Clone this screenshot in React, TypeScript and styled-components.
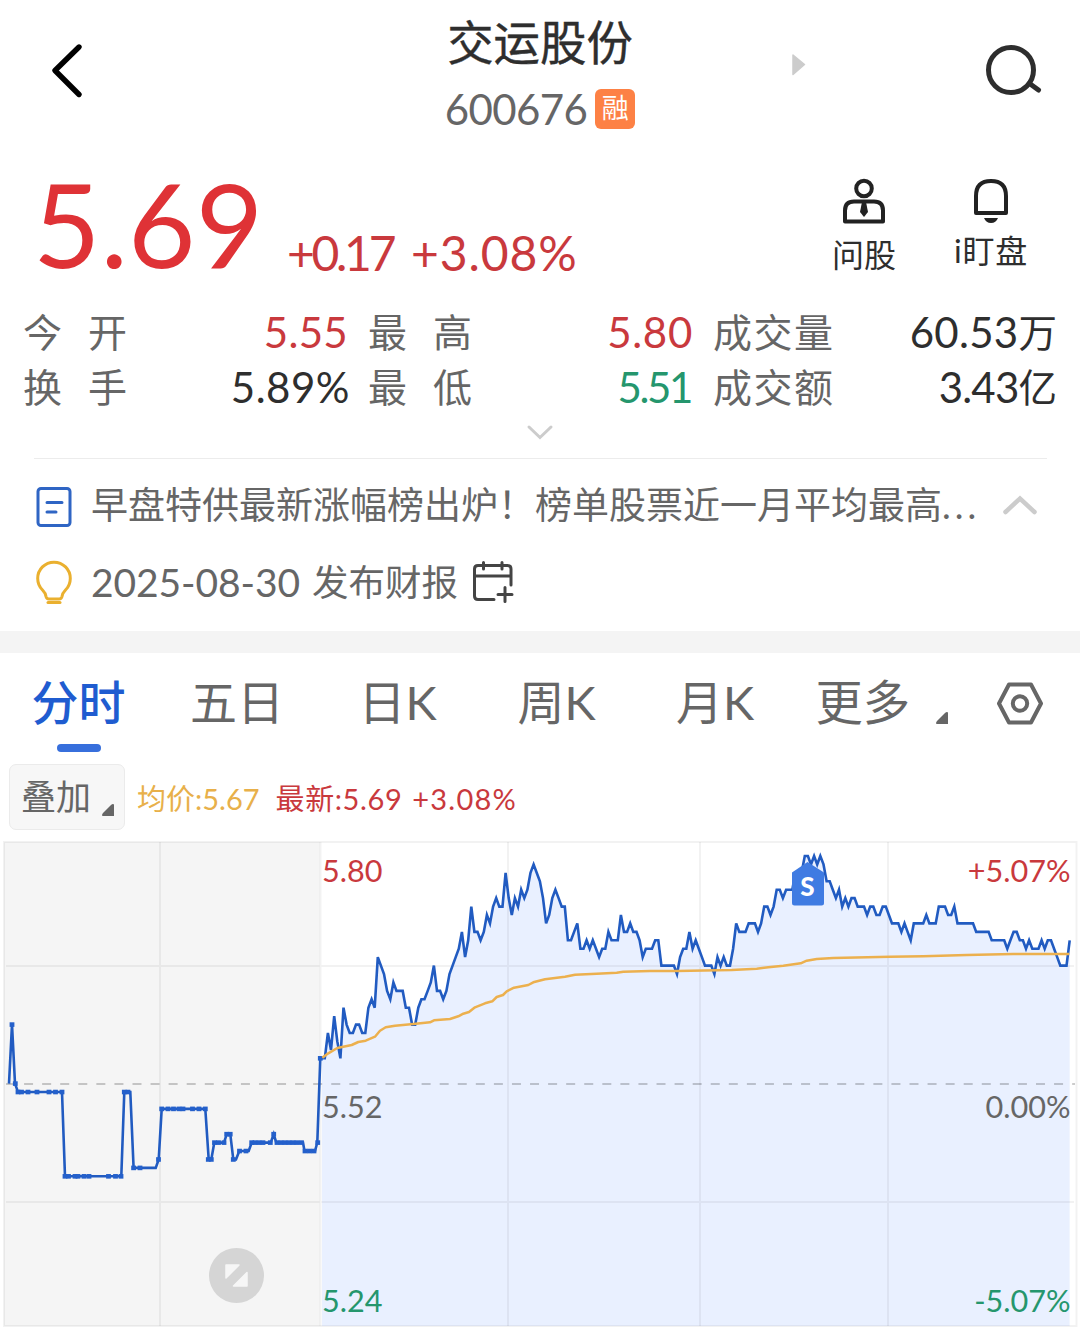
import React from "react";
import styled, { createGlobalStyle } from "styled-components";

const color = {
  red: "#c9393d",
  strongRed: "#df3236",
  green: "#25966d",
  ink: "#2e2e2e",
  text: "#666666",
  blue: "#1f5cd0",
  line: "#215bc1",
  amber: "#e8b04a",
};

const GlobalStyle = createGlobalStyle`
  * { box-sizing: border-box; }
  body { margin: 0; background: #fff; }
`;

const Page = styled.main`
  width: 1080px;
  height: 1336px;
  overflow: hidden;
  background: #fff;
  color: ${color.ink};
  font-family: Lato, "Noto Sans CJK SC", sans-serif;
  white-space: nowrap;
`;

const Icon = styled.svg`
  display: block;
  flex: none;
  overflow: visible;
`;

/* ---------- header ---------- */

const Header = styled.header`
  display: grid;
  grid-template-columns: 360px 360px 360px;
  height: 150px;
`;

const HeaderLeft = styled.div`
  padding: 44px 0 0 51px;
`;

const HeaderCenter = styled.div`
  display: flex;
  flex-direction: column;
  align-items: center;
  padding-top: 11px;
`;

const HeaderRight = styled.div`
  display: flex;
  align-items: flex-start;
  justify-content: space-between;
  padding: 44px 37px 0 72px;
`;

const StockName = styled.h1`
  margin: 0;
  font-size: 46.4px;
  font-weight: 400;
  line-height: 62px;
  -webkit-text-stroke: 0.4px currentColor;
`;

const CodeRow = styled.div`
  display: flex;
  align-items: center;
  gap: 8px;
  height: 40px;
  margin-top: 16px;
`;

const Code = styled.span`
  font-size: 42px;
  line-height: 40px;
  letter-spacing: -0.6px;
  color: ${color.text};
`;

const MarginTag = styled.span`
  width: 40px;
  height: 40px;
  border-radius: 6px;
  background: #fd8145;
  color: #fff;
  font-size: 27px;
  line-height: 38px;
  text-align: center;
`;

/* ---------- quote ---------- */

const Quote = styled.section`
  display: flex;
  align-items: flex-start;
  height: 156px;
  padding: 0 52px 0 33px;
`;

const Price = styled.span`
  width: 254px;
  padding-top: 3px;
  font-size: 116.5px;
  line-height: 140px;
  color: ${color.strongRed};
`;

const Change = styled.span<{ $width: number; $spacing: number }>`
  width: ${(p) => p.$width}px;
  padding-top: 73px;
  font-size: 48px;
  line-height: 60px;
  letter-spacing: ${(p) => p.$spacing}px;
  color: ${color.red};
`;

const Actions = styled.div`
  display: flex;
  gap: 58px;
  margin-left: auto;
  padding-top: 29px;
`;

const Action = styled.div<{ $rise?: number; $spacing?: number }>`
  display: flex;
  flex-direction: column;
  align-items: center;
  gap: ${(p) => 10 - (p.$rise ?? 0)}px;
  font-size: 32px;
  line-height: 42px;
  letter-spacing: ${(p) => p.$spacing ?? 0}px;
`;

/* ---------- statistics ---------- */

const Stats = styled.section`
  display: grid;
  grid-template-columns: 345px 345px 344px;
  grid-auto-rows: 55px;
  height: 110px;
  margin-top: -1px;
  padding-left: 23px;
`;

const Stat = styled.div<{ $inset: number }>`
  display: flex;
  align-items: center;
  justify-content: space-between;
  padding-right: ${(p) => p.$inset}px;
`;

const StatLabel = styled.span<{ $wide?: boolean }>`
  font-size: 39px;
  line-height: 55px;
  letter-spacing: ${(p) => (p.$wide ? 26 : 1.5)}px;
  color: ${color.text};
`;

const StatValue = styled.span<{ $tone: string; $spacing?: number }>`
  display: flex;
  align-items: center;
  font-size: 42px;
  line-height: 55px;
  letter-spacing: ${(p) => p.$spacing ?? 0}px;
  color: ${(p) => p.$tone};
`;

const Unit = styled.span`
  font-size: 38.5px;
  letter-spacing: 0;
`;

const Expand = styled.div`
  display: flex;
  justify-content: center;
  height: 43px;
  padding-top: 10px;
`;

/* ---------- notices ---------- */

const Notices = styled.section`
  height: 173px;
  margin: 0 33px 0 34px;
  border-top: 1px solid #ececec;
  padding-top: 10px;
`;

const Notice = styled.div`
  display: flex;
  align-items: center;
  height: 77px;
  color: ${color.text};
  font-size: 37px;
  line-height: 54px;
`;

const NoticeIcon = styled.div`
  display: flex;
  width: 57px;
  padding-left: 2px;
`;

const Headline = styled.span`
  width: 912px;
  padding-bottom: 5px;
`;

const Dots = styled.span`
  letter-spacing: 4px;
`;

const DateText = styled.span`
  padding-bottom: 6px;
  font-size: 39px;
  letter-spacing: -0.1px;
  margin-right: 12px;
`;

const Report = styled.span`
  padding-bottom: 5px;
  font-size: 36.5px;
  margin-right: 14px;
`;

const NoticeAction = styled.div`
  display: flex;
  padding-bottom: 5px;
`;

const Band = styled.div`
  height: 22px;
  background: #f4f4f4;
`;

/* ---------- tabs ---------- */

const Tabs = styled.nav`
  display: grid;
  grid-template-columns: 157px 160px 161px 157px 160px 181px 104px;
  height: 106px;
`;

const Tab = styled.div<{ $active?: boolean }>`
  display: flex;
  flex-direction: column;
  align-items: center;
  padding-top: 16px;
  font-size: 47px;
  font-weight: ${(p) => (p.$active ? 500 : 400)};
  line-height: 66px;
  color: ${(p) => (p.$active ? color.blue : color.text)};
  &::after {
    content: "";
    width: 44px;
    height: 8px;
    margin-top: 9px;
    border-radius: 4px;
    background: ${(p) => (p.$active ? "#376fdc" : "transparent")};
  }
`;

const MoreTab = styled.div`
  display: flex;
  align-items: flex-end;
  gap: 26px;
  height: 82px;
  padding-left: 20.5px;
  font-size: 47.3px;
  line-height: 66px;
  color: ${color.text};
`;

const Corner = styled.span<{ $lift: number }>`
  display: flex;
  padding-bottom: ${(p) => p.$lift}px;
`;

const Settings = styled.div`
  padding: 29px 0 0 21px;
`;

/* ---------- chart ---------- */

const Legend = styled.div`
  display: flex;
  align-items: center;
  height: 76px;
  padding: 0 0 0 9px;
  font-size: 29px;
`;

const Overlay = styled.button`
  display: flex;
  align-items: flex-end;
  gap: 11px;
  width: 116px;
  height: 66px;
  margin: 0 12px 0 0;
  padding: 0 0 1px 11px;
  border: 1px solid #ebebeb;
  border-radius: 7px;
  background: #f7f7f7;
  font: 35px/63px Lato, "Noto Sans CJK SC", sans-serif;
  color: ${color.text};
`;

const LegendItem = styled.span<{ $tone: string; $spacing: number; $gap: number }>`
  margin-right: ${(p) => p.$gap}px;
  padding-top: 4px;
  line-height: 42px;
  letter-spacing: ${(p) => p.$spacing}px;
  color: ${(p) => p.$tone};
`;

const Percent = styled.span`
  margin-left: 10px;
  letter-spacing: 1.2px;
`;

const ChartArea = styled.section`
  position: relative;
  height: 501px;
`;

const AxisLabel = styled.span<{ $tone: string; $top: number; $side: "left" | "right" }>`
  position: absolute;
  top: ${(p) => p.$top}px;
  ${(p) => (p.$side === "left" ? "left: 322px;" : "right: 9.5px;")}
  font-size: 30.6px;
  line-height: 40px;
  color: ${(p) => p.$tone};
`;

const CHART_TOP = 835;
const BASE_Y = 1083.6 - CHART_TOP;
const CENT = 8.43;
const OPEN_X = 321.7;
const MINUTE = 3.1165;

// Cents above the previous close (5.52), one entry per minute of trading.
const minutes = [
  3, 3, 6, 4, 8, 5, 3, 9, 7, 6, 6, 7, 7, 6, 6, 9, 10, 9, 15, 14,
  13, 11, 10, 12, 11, 11, 11, 9, 9, 7, 7, 9, 10, 10, 11, 12, 14, 11, 11, 10,
  11, 13, 14, 15, 16, 18, 15, 17, 21, 18, 18, 17, 18, 20, 19, 21, 22, 21, 21, 25,
  22, 20, 22, 21, 23, 22, 23, 25, 26, 25, 24, 22, 19, 20, 22, 23, 22, 21, 21, 17,
  17, 18, 19, 16, 16, 17, 16, 17, 16, 15, 16, 16, 18, 17, 17, 17, 20, 18, 18, 19,
  18, 18, 17, 15, 16, 16, 16, 17, 17, 14, 14, 14, 14, 14, 13, 15, 16, 16, 18, 16,
  17, 16, 15, 14, 14, 14, 13, 15, 14, 15, 14, 14, 16, 19, 18, 18, 18, 19, 19, 19,
  18, 19, 21, 21, 20, 21, 23, 23, 22, 23, 23, 23, 25, 25, 25, 27, 27, 26, 27, 26,
  27, 26, 24, 24, 23, 22, 23, 21, 22, 21, 22, 22, 21, 21, 21, 20, 21, 21, 20, 20,
  21, 21, 20, 19, 19, 19, 18, 19, 18, 17, 19, 19, 19, 19, 20, 19, 19, 19, 21, 21,
  21, 20, 20, 21, 19, 19, 19, 19, 19, 19, 18, 18, 18, 18, 18, 17, 17, 17, 17, 17,
  16, 17, 18, 18, 17, 17, 16, 17, 16, 16, 16, 17, 16, 17, 17, 16, 15, 14, 14, 14,
  17,
];

// Call auction: [x, cents relative to the previous close].
const auction: [number, number][] = [
  [9, 0], [12, 7], [15, 0], [18, -1], [62, -1], [65, -11], [121.3, -11], [124.3, -1],
  [130.3, -1], [133.6, -10], [155.7, -10], [158.7, -9], [161.7, -3], [205.3, -3],
  [208.7, -9], [211.3, -9], [214.3, -7], [224, -7], [226.7, -6], [230.3, -6],
  [233.3, -9], [236, -9], [239.3, -8], [248.7, -8], [251.7, -7], [270.7, -7],
  [273.7, -6], [276.3, -7], [303, -7], [304.5, -8], [315, -8], [317.3, -7], [320.3, 3],
];

// Order ticks printed on the auction line.
const ticks: [number, number][] = [
  [12, 7], [15.3, 0], [18, -1], [21.5, -1], [28, -1], [37, -1], [49, -1], [55.5, -1], [62, -1],
  [65, -11], [68.5, -11], [75, -11], [78, -11], [84, -11], [89, -11], [108.5, -11], [115.5, -11], [121, -11],
  [124.3, -1], [128, -1], [133.6, -10], [140, -10], [158.5, -9], [161.7, -3], [168, -3], [173.5, -3],
  [179, -3], [183, -3], [192.5, -3], [199, -3], [205.3, -3], [208.3, -9], [211.3, -9], [214.5, -7],
  [218.5, -7], [224, -7], [226.7, -6], [230.2, -6], [233.3, -9], [239.5, -8], [246, -8], [251.7, -7],
  [255, -7], [259, -7], [263, -7], [270.3, -7], [273.7, -6], [277, -7], [281, -7], [285, -7],
  [289, -7], [293, -7], [297, -7], [301.5, -7], [305, -8], [309.5, -8], [314, -8], [317.7, -7], [320.3, 3],
];

const average: [number, number][] = [
  [322.3, 1057.7], [328.3, 1053.3], [337.3, 1048], [351.7, 1045], [358.3, 1042], [365.7, 1040.7],
  [375, 1036.7], [380, 1030.7], [385.7, 1027.3], [395, 1025.7], [413.3, 1024], [430, 1022.3],
  [434, 1020.3], [450, 1019], [458.3, 1016.3], [463.3, 1013.7], [469, 1012], [475, 1007.3],
  [485, 1003.3], [492.3, 1001.3], [496.7, 997], [503, 995], [506.7, 991.3], [514, 987.7],
  [528.3, 985], [533.3, 982.3], [545, 979.3], [565, 976.7], [575, 974.7], [596.7, 973.7],
  [616.7, 972.7], [623.3, 971.7], [650, 971], [676.7, 971], [731.7, 970], [756.7, 968.7],
  [768.3, 967.3], [783.3, 965.7], [800.7, 963.3], [806.7, 960.7], [816.7, 959], [833.3, 958],
  [890, 956.8], [923.3, 956.3], [966.7, 955], [1013.3, 954], [1069.3, 954],
];

const toY = (cents: number) => BASE_Y - cents * CENT;
const join = (points: [number, number][]) =>
  points.map(([x, y]) => `${x.toFixed(1)},${y.toFixed(1)}`).join(" ");

const session: [number, number][] = minutes.map((c, i) => [OPEN_X + i * MINUTE, toY(c)]);
const auctionLine: [number, number][] = auction.map(([x, c]) => [x, toY(c)]);

const Chart = () => (
  <ChartArea>
    <Icon width="1080" height="501" viewBox="0 0 1080 501" fill="none">
      <rect x="4" y="7" width="316" height="484" fill="#f5f5f5" />
      <polygon points={`322,491 322,${toY(3)} ${join(session)} 1069.6,491`} fill="#e9f0ff" />
      <g stroke="#000" strokeOpacity="0.052" strokeWidth="2">
        <rect x="4" y="7" width="1072.5" height="484" />
        <path d="M160 7V491M320.5 7V491M508 7V491M700 7V491M888 7V491M6 131H1074M6 367H1074" />
      </g>
      <path d="M6 249H1075" stroke="#000" strokeOpacity="0.2" strokeWidth="2" strokeDasharray="9 9.07" />
      <polyline points={join([...auctionLine, ...session])} stroke={color.line} strokeWidth="2.6" strokeLinejoin="miter" />
      {ticks.map(([x, c]) => (
        <rect key={`${x}${c}`} x={x - 2.4} y={toY(c) - 2.3} width="4.8" height="4.6" fill="#2460cb" />
      ))}
      <polyline
        points={join(average.map(([x, y]) => [x, y - CHART_TOP]))}
        stroke="#ecb04e"
        strokeWidth="2.5"
        strokeLinejoin="round"
      />
      <path d="M792 37.5L807.5 27L824 37.5V68Q824 70.5 821.5 70.5H794.5Q792 70.5 792 68Z" fill="#3f7be2" />
      <text x="807.5" y="60.5" textAnchor="middle" fontFamily="Lato, sans-serif" fontWeight="900" fontSize="26" fill="#fff">
        S
      </text>
      <circle cx="236.5" cy="440.5" r="27.5" fill="#d5d5d5" />
      <path
        d="M226 430H239L226 443ZM247 437.5V451H233.5Z"
        fill="#f6f6f6"
        stroke="#f6f6f6"
        strokeWidth="1.5"
        strokeLinejoin="round"
      />
    </Icon>
    <AxisLabel $side="left" $top={16} $tone={color.red}>5.80</AxisLabel>
    <AxisLabel $side="right" $top={16} $tone={color.red}>+5.07%</AxisLabel>
    <AxisLabel $side="left" $top={252} $tone={color.text}>5.52</AxisLabel>
    <AxisLabel $side="right" $top={252} $tone={color.text}>0.00%</AxisLabel>
    <AxisLabel $side="left" $top={446} $tone={color.green}>5.24</AxisLabel>
    <AxisLabel $side="right" $top={446} $tone={color.green}>-5.07%</AxisLabel>
  </ChartArea>
);

const CornerMark = () => (
  <Icon width="12" height="12" viewBox="0 0 12 12">
    <path d="M12 1Q12 0 11 0Q10 0 9 1L1 9Q-1 12 1 12H12Z" fill="#666" />
  </Icon>
);

export default function App() {
  return (
    <Page>
      <GlobalStyle />
      <Header>
        <HeaderLeft>
          <Icon width="31" height="54" viewBox="0 0 31 54" fill="none">
            <path d="M28 3L4 26.5L28 50.5" stroke="#000" strokeWidth="5.4" strokeLinecap="round" strokeLinejoin="round" />
          </Icon>
        </HeaderLeft>
        <HeaderCenter>
          <StockName>交运股份</StockName>
          <CodeRow>
            <Code>600676</Code>
            <MarginTag>融</MarginTag>
          </CodeRow>
        </HeaderCenter>
        <HeaderRight>
          <Icon width="14" height="42" viewBox="0 0 14 42">
            <path d="M1 11L12.5 20.5L1 30.5Z" fill="#ccc" stroke="#ccc" strokeWidth="1.5" strokeLinejoin="round" />
          </Icon>
          <Icon width="57" height="52" viewBox="0 0 57 52" fill="none" stroke="#2e2e2e" strokeWidth="5">
            <circle cx="25" cy="26" r="22.5" />
            <path d="M43.5 39.5L52.5 46" strokeLinecap="round" />
          </Icon>
        </HeaderRight>
      </Header>

      <Quote>
        <Price>5.69</Price>
        <Change $width={124} $spacing={-3.3}>+0.17</Change>
        <Change $width={170} $spacing={0.9}>+3.08%</Change>
        <Actions>
          <Action>
            <Icon width="44" height="45" viewBox="0 0 44 45" fill="none" stroke="#222" strokeWidth="4">
              <circle cx="22" cy="9.5" r="7.8" />
              <path d="M12 22.5H32Q41 22.5 41 31.5V42.5H3V31.5Q3 22.5 12 22.5Z" strokeLinejoin="round" />
              <path d="M20 23H24L26 33L22 38L18 33Z" fill="#222" stroke="none" />
            </Icon>
            问股
          </Action>
          <Action $rise={4} $spacing={0.8}>
            <Icon width="34" height="45" viewBox="0 0 34 45" fill="none" stroke="#222" strokeWidth="4">
              <path d="M2 17Q2 2 17 2Q32 2 32 17V34H2Z" strokeLinejoin="round" />
              <path d="M10 39H24Q22 44 17 44Q12 44 10 39Z" fill="#222" stroke="none" />
            </Icon>
            i盯盘
          </Action>
        </Actions>
      </Quote>

      <Stats>
        <Stat $inset={20}>
          <StatLabel $wide>今开</StatLabel>
          <StatValue $tone={color.red} $spacing={0.3}>5.55</StatValue>
        </Stat>
        <Stat $inset={20}>
          <StatLabel $wide>最高</StatLabel>
          <StatValue $tone={color.red} $spacing={0.7}>5.80</StatValue>
        </Stat>
        <Stat $inset={0}>
          <StatLabel>成交量</StatLabel>
          <StatValue $tone={color.ink} $spacing={0.3}>60.53<Unit>万</Unit></StatValue>
        </Stat>
        <Stat $inset={18}>
          <StatLabel $wide>换手</StatLabel>
          <StatValue $tone={color.ink} $spacing={0.5}>5.89%</StatValue>
        </Stat>
        <Stat $inset={22}>
          <StatLabel $wide>最低</StatLabel>
          <StatValue $tone={color.green} $spacing={-2.4}>5.51</StatValue>
        </Stat>
        <Stat $inset={0}>
          <StatLabel>成交额</StatLabel>
          <StatValue $tone={color.ink} $spacing={-0.8}>3.43<Unit>亿</Unit></StatValue>
        </Stat>
      </Stats>
      <Expand>
        <Icon width="26" height="15" viewBox="0 0 26 15" fill="none">
          <path d="M2 2L13 12.5L24 2" stroke="#ccc" strokeWidth="3" strokeLinecap="round" />
        </Icon>
      </Expand>

      <Notices>
        <Notice>
          <NoticeIcon>
            <Icon width="36" height="41" viewBox="0 0 36 41" fill="none" stroke="#2f65c4" strokeWidth="3" strokeLinecap="round">
              <rect x="2" y="1.5" width="32" height="37" rx="3" />
              <path d="M11 15.5H26M11 25H20" />
            </Icon>
          </NoticeIcon>
          <Headline>
            早盘特供最新涨幅榜出炉！榜单股票近一月平均最高<Dots>...</Dots>
          </Headline>
          <NoticeAction>
            <Icon width="34" height="20" viewBox="0 0 34 20" fill="none">
              <path d="M2.5 17L17 3.5L31.5 17" stroke="#ccc" strokeWidth="4.5" strokeLinecap="round" />
            </Icon>
          </NoticeAction>
        </Notice>
        <Notice>
          <NoticeIcon>
            <Icon width="36" height="43" viewBox="0 0 36 43" fill="none" stroke="#eab02f" strokeWidth="3" strokeLinecap="round" strokeLinejoin="round">
              <path d="M10 33.5Q9.5 30 6.5 27A16.3 16.3 0 1 1 29.5 27Q26.5 30 26 33.5Q25.5 36 23 36H13Q10.5 36 10 33.5Z" />
              <path d="M12 39.5H24" />
            </Icon>
          </NoticeIcon>
          <DateText>2025-08-30</DateText>
          <Report>发布财报</Report>
          <NoticeAction>
            <Icon width="42" height="42" viewBox="0 0 42 42" fill="none" stroke="#444" strokeWidth="3" strokeLinecap="round">
              <path d="M22 38.5H6Q2.5 38.5 2.5 35V8Q2.5 4.5 6 4.5H35.5Q39 4.5 39 8V24M3 15H39M11.5 1.5V8M30 1.5V8M26 33.5H40M33 26.5V40.5" />
            </Icon>
          </NoticeAction>
        </Notice>
      </Notices>
      <Band />

      <Tabs>
        <Tab $active>分时</Tab>
        <Tab>五日</Tab>
        <Tab>日K</Tab>
        <Tab>周K</Tab>
        <Tab>月K</Tab>
        <MoreTab>
          更多
          <Corner $lift={11}><CornerMark /></Corner>
        </MoreTab>
        <Settings>
          <Icon width="46" height="43" viewBox="0 0 46 43" fill="none" stroke="#666" strokeWidth="4">
            <path d="M12 2.5H34L44 21.5L34 40.5H12L2 21.5Z" strokeLinejoin="round" />
            <circle cx="23" cy="21.5" r="7.2" />
          </Icon>
        </Settings>
      </Tabs>

      <Legend>
        <Overlay>
          叠加
          <Corner $lift={12}><CornerMark /></Corner>
        </Overlay>
        <LegendItem $tone={color.amber} $spacing={0} $gap={16}>均价:5.67</LegendItem>
        <LegendItem $tone={color.red} $spacing={0.6} $gap={0}>
          最新:5.69<Percent>+3.08%</Percent>
        </LegendItem>
      </Legend>
      <Chart />
    </Page>
  );
}
